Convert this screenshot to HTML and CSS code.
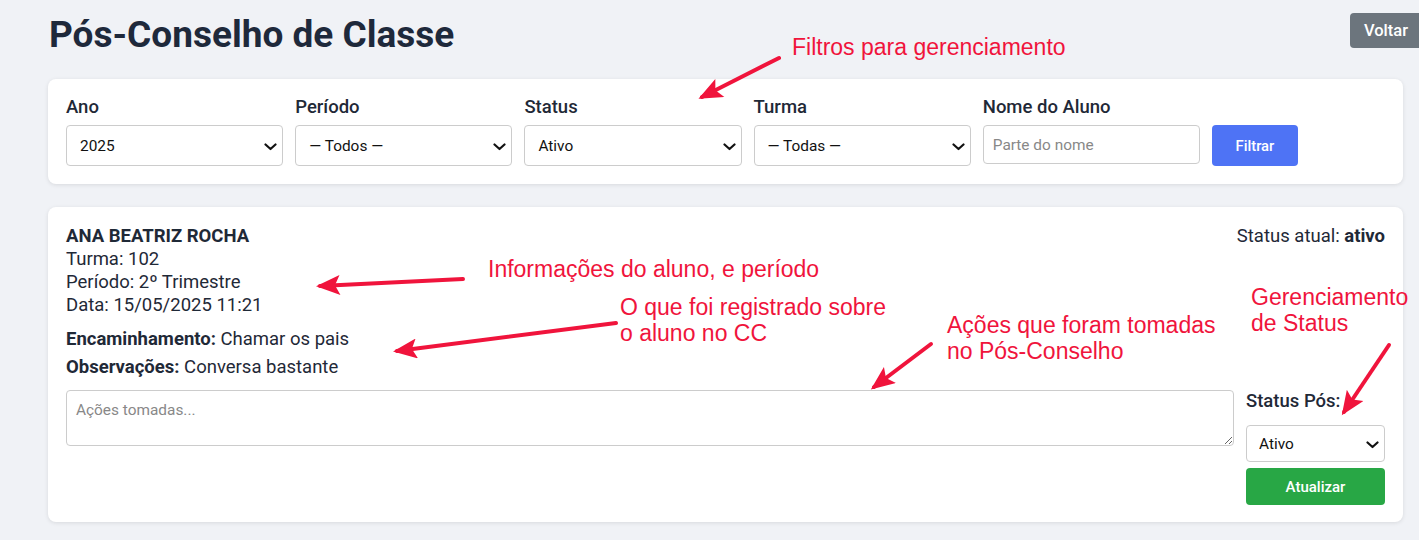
FILE: index.html
```html
<!DOCTYPE html>
<html lang="pt-BR">
<head>
    <meta charset="UTF-8">
    <meta name="viewport" content="width=device-width, initial-scale=1.0">
    <title>Pós-Conselho de Classe</title>
    <link rel="stylesheet" href="styles.css">
</head>
<body>
    <div class="page">
        <div class="page-header">
            <h1 class="page-title">Pós-Conselho de Classe</h1>
            <a href="#" class="btn btn-back">Voltar</a>
        </div>

        <form class="card filters">
            <div class="filter-group">
                <label class="filter-label">Ano</label>
                <div class="select-wrap">
                    <select class="field">
                        <option>2025</option>
                    </select>
                    <svg class="chevron" width="13" height="8" viewBox="0 0 13 8"><path d="M1.5 1.5 L6.5 6 L11.5 1.5" fill="none" stroke="#111" stroke-width="2.2" stroke-linecap="round" stroke-linejoin="round"/></svg>
                </div>
            </div>
            <div class="filter-group">
                <label class="filter-label">Período</label>
                <div class="select-wrap">
                    <select class="field">
                        <option>— Todos —</option>
                    </select>
                    <svg class="chevron" width="13" height="8" viewBox="0 0 13 8"><path d="M1.5 1.5 L6.5 6 L11.5 1.5" fill="none" stroke="#111" stroke-width="2.2" stroke-linecap="round" stroke-linejoin="round"/></svg>
                </div>
            </div>
            <div class="filter-group">
                <label class="filter-label">Status</label>
                <div class="select-wrap">
                    <select class="field">
                        <option>Ativo</option>
                    </select>
                    <svg class="chevron" width="13" height="8" viewBox="0 0 13 8"><path d="M1.5 1.5 L6.5 6 L11.5 1.5" fill="none" stroke="#111" stroke-width="2.2" stroke-linecap="round" stroke-linejoin="round"/></svg>
                </div>
            </div>
            <div class="filter-group">
                <label class="filter-label">Turma</label>
                <div class="select-wrap">
                    <select class="field">
                        <option>— Todas —</option>
                    </select>
                    <svg class="chevron" width="13" height="8" viewBox="0 0 13 8"><path d="M1.5 1.5 L6.5 6 L11.5 1.5" fill="none" stroke="#111" stroke-width="2.2" stroke-linecap="round" stroke-linejoin="round"/></svg>
                </div>
            </div>
            <div class="filter-group">
                <label class="filter-label">Nome do Aluno</label>
                <input type="text" class="field field-text" placeholder="Parte do nome">
            </div>
            <button type="button" class="btn btn-filter">Filtrar</button>
        </form>

        <div class="card student">
            <div class="student-top">
                <div class="student-info">
                    <div class="student-name">ANA BEATRIZ ROCHA</div>
                    <div>Turma: 102</div>
                    <div>Período: 2º Trimestre</div>
                    <div>Data: 15/05/2025 11:21</div>
                </div>
                <div class="student-status">Status atual: <strong>ativo</strong></div>
            </div>

            <p class="student-note"><strong>Encaminhamento:</strong> Chamar os pais</p>
            <p class="student-note"><strong>Observações:</strong> Conversa bastante</p>

            <div class="student-actions">
                <textarea class="actions-text" placeholder="Ações tomadas..."></textarea>
                <div class="status-form">
                    <label class="status-label">Status Pós:</label>
                    <div class="select-wrap select-small">
                        <select class="field field-small">
                            <option>Ativo</option>
                        </select>
                        <svg class="chevron" width="13" height="8" viewBox="0 0 13 8"><path d="M1.5 1.5 L6.5 6 L11.5 1.5" fill="none" stroke="#111" stroke-width="2.2" stroke-linecap="round" stroke-linejoin="round"/></svg>
                    </div>
                    <button type="button" class="btn btn-update">Atualizar</button>
                </div>
            </div>
        </div>
    </div>

    <!-- notas da captura -->
    <div class="notes">
        <svg class="notes-arrows" width="1419" height="540" viewBox="0 0 1419 540">
            <defs>
                <marker id="head" viewBox="0 0 12 10" refX="10" refY="5" markerWidth="6.5" markerHeight="5" orient="auto" markerUnits="strokeWidth">
                    <path d="M0 0 L12 5 L0 10 L2.5 5 Z" fill="#f0143c"/>
                </marker>
            </defs>
            <g stroke="#f0143c" stroke-width="4" stroke-linecap="round" marker-end="url(#head)">
                <line x1="779" y1="58" x2="702" y2="97"/>
                <line x1="463" y1="279" x2="320" y2="286"/>
                <line x1="616" y1="323" x2="397" y2="351"/>
                <line x1="931" y1="344" x2="874" y2="387"/>
                <line x1="1389" y1="345" x2="1344" y2="412"/>
            </g>
        </svg>
        <div class="note note-filters">Filtros para gerenciamento</div>
        <div class="note note-info">Informações do aluno, e período</div>
        <div class="note note-record">O que foi registrado sobre<br>o aluno no CC</div>
        <div class="note note-actions">Ações que foram tomadas<br>no Pós-Conselho</div>
        <div class="note note-status">Gerenciamento<br>de Status</div>
    </div>
</body>
</html>
```

FILE: styles.css
```css
* {
    margin: 0;
    padding: 0;
    box-sizing: border-box;
}

body {
    background-color: #f0f2f6;
    color: #1f2937;
    font-family: 'Roboto', 'Liberation Sans', sans-serif;
    font-size: 18.5px;
    line-height: 23px;
    min-height: 100vh;
    overflow: hidden;
    position: relative;
}

.page {
    padding: 13px 16px 0 48px;
}

.page-header {
    display: flex;
    justify-content: space-between;
    align-items: flex-start;
    margin-right: -19px;
    height: 66px;
}

.page-title {
    font-size: 37px;
    font-weight: 700;
    line-height: 44px;
    color: #1e293b;
    margin-left: 1px;
}

.btn {
    border: none;
    border-radius: 4px;
    color: #ffffff;
    font-family: inherit;
    font-weight: 500;
    cursor: pointer;
    text-decoration: none;
    display: inline-flex;
    align-items: center;
    justify-content: center;
}

.btn-back {
    background-color: #6c757d;
    font-size: 16.5px;
    width: 72px;
    height: 35px;
}

.card {
    background-color: #ffffff;
    border-radius: 8px;
    box-shadow: 0 1px 4px rgba(0, 0, 0, 0.1);
}

.filters {
    display: flex;
    align-items: flex-end;
    gap: 12px;
    padding: 17px 18px 18px;
    margin-bottom: 23px;
}

.filter-group {
    flex: 0 0 217.2px;
    display: flex;
    flex-direction: column;
}

.filter-label {
    font-size: 18.5px;
    font-weight: 500;
    line-height: 22px;
    margin-bottom: 7px;
    color: #1f2937;
}

.select-wrap {
    position: relative;
}

.chevron {
    position: absolute;
    right: 6px;
    top: 50%;
    margin-top: -3px;
    pointer-events: none;
}

.field {
    display: block;
    height: 41px;
    width: 100%;
    border: 1px solid #cccccc;
    border-radius: 4px;
    background-color: #ffffff;
    font-family: inherit;
    font-size: 15.4px;
    color: #111111;
    padding: 0 13px;
    appearance: none;
    -webkit-appearance: none;
}

.field-text {
    height: 39px;
    margin-bottom: 2px;
    padding: 0 9px;
}

.field-text::placeholder {
    color: #888888;
}

.btn-filter {
    background-color: #4e73f5;
    font-size: 14.8px;
    width: 86px;
    height: 41px;
}

.student {
    padding: 18px 18px 17px;
}

.student-top {
    display: flex;
    justify-content: space-between;
}

.student-name {
    font-weight: 700;
}

.student-note {
    margin-top: 5px;
}

.student-top + .student-note {
    margin-top: 11px;
}

.student-actions {
    display: flex;
    gap: 12px;
    margin-top: 11px;
}

.actions-text {
    flex: 1;
    height: 56px;
    border: 1px solid #cccccc;
    border-radius: 4px;
    font-family: inherit;
    font-size: 15.4px;
    padding: 10px 9px;
    resize: vertical;
}

.actions-text::placeholder {
    color: #888888;
}

.status-form {
    width: 139px;
    display: flex;
    flex-direction: column;
}

.status-label {
    font-weight: 500;
    line-height: 22px;
    margin-bottom: 13px;
}

.select-small {
    margin-bottom: 6px;
}

.field-small {
    height: 37px;
    padding: 0 12px;
}

.btn-update {
    background-color: #28a745;
    font-size: 15px;
    height: 37px;
}

/* notas */

.notes {
    position: absolute;
    top: 0;
    left: 0;
    width: 1419px;
    height: 540px;
    pointer-events: none;
}

.notes-arrows {
    position: absolute;
    top: 0;
    left: 0;
}

.note {
    position: absolute;
    color: #f0143c;
    font-family: 'Liberation Sans', Arial, sans-serif;
    font-size: 23px;
    line-height: 26px;
    white-space: nowrap;
}

.note-filters {
    left: 792px;
    top: 34px;
}

.note-info {
    left: 488px;
    top: 256px;
}

.note-record {
    left: 620px;
    top: 294px;
}

.note-actions {
    left: 947px;
    top: 312px;
}

.note-status {
    left: 1251px;
    top: 284px;
}
```
